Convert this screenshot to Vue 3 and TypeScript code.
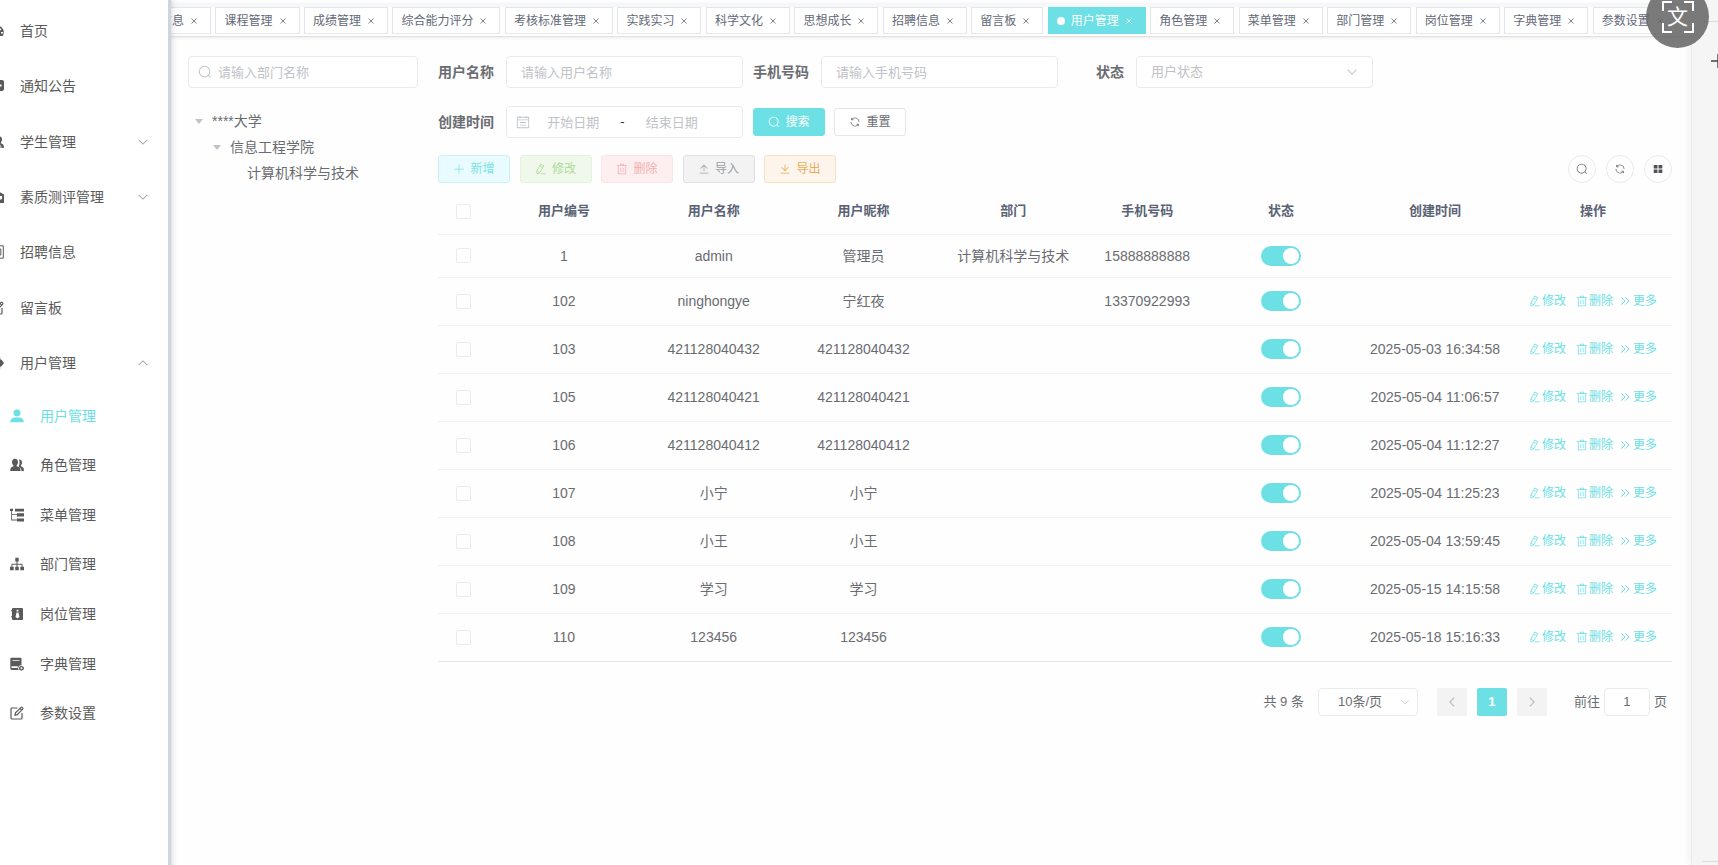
<script setup lang="ts">
import { h, ref } from 'vue'

interface IconDef {
  box: number
  d: string
  stroke?: number
}

const icons: Record<string, IconDef> = {
  search: { box: 1024, d: 'm795.904 750.72 124.992 124.928a32 32 0 0 1-45.248 45.248L750.656 795.904a416 416 0 1 1 45.248-45.248zM480 832a352 352 0 1 0 0-704 352 352 0 0 0 0 704' },
  refresh: { box: 1024, d: 'M771.776 794.88A384 384 0 0 1 128 512h64a320 320 0 0 0 555.712 216.448H654.72a32 32 0 1 1 0-64h149.056a32 32 0 0 1 32 32v148.928a32 32 0 1 1-64 0v-50.56zM276.288 295.616h92.992a32 32 0 0 1 0 64H220.16a32 32 0 0 1-32-32V178.56a32 32 0 0 1 64 0v50.56A384 384 0 0 1 896.128 512h-64a320 320 0 0 0-555.776-216.384z' },
  plus: { box: 1024, d: 'M480 480V128a32 32 0 0 1 64 0v352h352a32 32 0 1 1 0 64H544v352a32 32 0 1 1-64 0V544H128a32 32 0 0 1 0-64z' },
  edit: { box: 1024, d: 'm199.04 672.64 193.984 112 224-387.968-193.92-112-224 388.032zm-23.872 60.16 32.896 148.288 144.896-45.696zM455.04 229.248l193.92 112 56.704-98.112-193.984-112zM104.32 708.8l384-665.024 304.768 175.936L409.152 884.8h.064l-248.448 78.336zm384 254.272v-64h448v64z' },
  trash: { box: 1024, d: 'M160 256H96a32 32 0 0 1 0-64h256V95.936a32 32 0 0 1 32-32h256a32 32 0 0 1 32 32V192h256a32 32 0 1 1 0 64h-64v672a32 32 0 0 1-32 32H192a32 32 0 0 1-32-32zm448-64v-64H416v64zM224 896h576V256H224zm192-128a32 32 0 0 1-32-32V416a32 32 0 0 1 64 0v320a32 32 0 0 1-32 32m192 0a32 32 0 0 1-32-32V416a32 32 0 0 1 64 0v320a32 32 0 0 1-32 32' },
  upload: { box: 1024, d: 'M160 832h704a32 32 0 1 1 0 64H160a32 32 0 1 1 0-64m384-578.304V704h-64V247.296L237.248 490.048 192 444.8 508.8 128l316.8 316.8-45.312 45.248z' },
  download: { box: 1024, d: 'M160 832h704a32 32 0 1 1 0 64H160a32 32 0 1 1 0-64m384-253.696 236.288-236.352 45.248 45.248L508.8 704 192 387.2l45.248-45.248L480 584.704V128h64z' },
  calendar: { box: 1024, d: 'M128 384v512h768V192H768v32a32 32 0 1 1-64 0v-32H320v32a32 32 0 0 1-64 0v-32H128v128h768v64zm192-256h384V96a32 32 0 1 1 64 0v32h160a32 32 0 0 1 32 32v768a32 32 0 0 1-32 32H96a32 32 0 0 1-32-32V160a32 32 0 0 1 32-32h160V96a32 32 0 0 1 64 0zM288 512h448v64H288zm0 192h448v64H288z' },
  grid: { box: 14, d: 'M2 2.300h4.400v4.100H2zM7.600 2.300H12v4.100H7.600zM2 7.600h4.400v4.100H2zM7.600 7.600H12v4.100H7.600z' },
  down: { box: 14, d: 'M2 4.500l5 5 5-5', stroke: 1.2 },
  up: { box: 14, d: 'M2 9.500l5-5 5 5', stroke: 1.2 },
  left: { box: 14, d: 'M9.500 2l-5 5 5 5', stroke: 1.4 },
  right: { box: 14, d: 'M4.500 2l5 5-5 5', stroke: 1.4 },
  more: { box: 14, d: 'M2 2l5 5-5 5M7.500 2l5 5-5 5', stroke: 1.4 },
  close: { box: 8, d: 'M1.500 1.500l5 5M6.500 1.500l-5 5', stroke: 0.8 },
  dashboard: { box: 14, d: 'M7 1.500a6.800 6.800 0 0 1 6.800 6.800c0 1.400-.4 2.700-1.100 3.700H1.300A6.800 6.800 0 0 1 7 1.500zM6.300 3v2h1.400V3zM10.500 4.200L7.600 7.700a1.400 1.400 0 1 0 1 .8l2.800-3.500zM11 8v1.400h2V8z' },
  message: { box: 14, d: 'M2 1h10a2 2 0 0 1 2 2v7a2 2 0 0 1-2 2H6l-3 2v-2H2a2 2 0 0 1-2-2V3a2 2 0 0 1 2-2zM9.500 5.500v2h2v-2zM6 5.500v2h2v-2z' },
  people: { box: 14, d: 'M5 .8c1.900 0 3 1.300 3 3.200 0 1.500-.6 2.700-1.300 3.300v1c1.900.6 3.500 1.300 3.700 2.700l.2 2H.3l.1-2c.2-1.400 1.600-2.100 3-2.700v-1C2.600 6.700 2 5.500 2 4 2 2.100 3.100.8 5 .8zM9 1.500c1.800-.2 3 1 3 3 0 1.300-.5 2.200-1.100 2.900v.9c1.500.6 2.700 1.200 2.900 2.500l.1 2.200h-2.400c-.1-2.300-1-3.300-3-4.200C9.400 7.500 10.200 4 9 1.500z' },
  education: { box: 14, d: 'M7 .5l7 4V13H0V4.500zM9.500 6v2.800l1.300 1 1.300-1V6zM3 6v1h4V6z' },
  form: { box: 14, d: 'M1 .8h12.300v12.400H1zM3.500 4h7.300v6H3.500zM7 4v6', stroke: 1 },
  pencil: { box: 14, d: 'M7.500 2H2a1 1 0 0 0-1 1v9a1 1 0 0 0 1 1h9a1 1 0 0 0 1-1V7M5 9.200l.5-2.300L11 1.400c.8-.8 2.500.8 1.700 1.700L7.200 8.700zM10 2.400l1.700 1.700', stroke: 1.2 },
  gear: { box: 14, d: 'M3.800 1h6.400v2.200l1.300.5L14 7l-2.500 3.300-1.300.5V13H3.800v-2.200l-1.300-.5L0 7l2.500-3.300 1.300-.5zM7 5a2 2 0 1 0 0 4 2 2 0 0 0 0-4z' },
  user: { box: 14, d: 'M7 .5a3.400 3.400 0 0 1 3.500 3.500C10.500 6 9 7.500 7 7.500S3.500 6 3.500 4A3.400 3.400 0 0 1 7 .5zM.2 13.300c0-2.900 1.900-4.700 4.800-4.700h4c2.900 0 4.800 1.800 4.800 4.700z' },
  tree: { box: 14, d: 'M0 .8h3v2.200H2V6.300h5V5.300h7v3.100H7V7.100H2v4.500h5v-1.100h7v3.100H7v-1.200H1.200V3H0zM5 .8h9v2.700H5z' },
  org: { box: 14, d: 'M5.300.8h3.400v3.600H7.500v2.400h5v3H14v3.500h-3.700V9.800h1.300V7.700H7.500v2.100h1.300v3.500H5.200V9.800h1.300V7.700H2.400v2.100h1.300v3.500H0V9.800h1.500v-3h5V4.400H5.300z' },
  badge: { box: 14, d: 'M3 1h9a1 1 0 0 1 1 1v10a1 1 0 0 1-1 1H3a1 1 0 0 1-1-1V2a1 1 0 0 1 1-1zM6.600 2.800v1.800h1.800V2.800zM6.500 5.500L5.500 10l2 1.600 2-1.600-1-4.500zM1 3.300h1v1H1zM1 9.300h1v1H1z' },
  dict: { box: 14, d: 'M1.200.8h9.300a1 1 0 0 1 1 1v6.400a3 3 0 0 0-2.800 4.700H2A1.700 1.700 0 0 1 .3 11V1.800c0-.6.4-1 .9-1zM2.500 3v.8h7V3zM2 9.300c-1 0-1 1.600 0 1.600h5.800V9.300zM11.300 8.800l2.500 1.300v2.300l-2.500 1.300-2.200-1.300v-2.300zM11.400 10.300a1 1 0 1 0 .1 2 1 1 0 0 0-.1-2z' },
}

const Icon = (props: { name: string }) => {
  const def = icons[props.name]
  return h('svg', { viewBox: `0 0 ${def.box} ${def.box}`, 'aria-hidden': 'true' }, [
    h('path', {
      d: def.d,
      fill: def.stroke ? 'none' : 'currentColor',
      'fill-rule': 'evenodd',
      stroke: def.stroke ? 'currentColor' : 'none',
      'stroke-width': def.stroke ?? 0,
    }),
  ])
}

const menu = [
  { label: '首页', icon: 'dashboard' },
  { label: '通知公告', icon: 'message' },
  { label: '学生管理', icon: 'people', arrow: 'down' },
  { label: '素质测评管理', icon: 'education', arrow: 'down' },
  { label: '招聘信息', icon: 'form' },
  { label: '留言板', icon: 'pencil' },
  { label: '用户管理', icon: 'gear', arrow: 'up' },
]

const submenu = [
  { label: '用户管理', icon: 'user' },
  { label: '角色管理', icon: 'people' },
  { label: '菜单管理', icon: 'tree' },
  { label: '部门管理', icon: 'org' },
  { label: '岗位管理', icon: 'badge' },
  { label: '字典管理', icon: 'dict' },
  { label: '参数设置', icon: 'pencil' },
]
const current = ref('用户管理')

const tags = [
  '学生信息', '课程管理', '成绩管理', '综合能力评分', '考核标准管理', '实践实习', '科学文化', '思想成长', '招聘信息',
  '留言板', '用户管理', '角色管理', '菜单管理', '部门管理', '岗位管理', '字典管理', '参数设置',
]

const tools = [
  { label: '新增', icon: 'plus', kind: 'primary' },
  { label: '修改', icon: 'edit', kind: 'success' },
  { label: '删除', icon: 'trash', kind: 'danger' },
  { label: '导入', icon: 'upload', kind: 'info' },
  { label: '导出', icon: 'download', kind: 'warning' },
]

const columns = ['用户编号', '用户名称', '用户昵称', '部门', '手机号码', '状态', '创建时间', '操作']

interface User {
  id: number
  name: string
  nick: string
  dept?: string
  phone?: string
  created?: string
  on: boolean
}

const users = ref<User[]>([
  { id: 1, name: 'admin', nick: '管理员', dept: '计算机科学与技术', phone: '15888888888', on: true },
  { id: 102, name: 'ninghongye', nick: '宁红夜', phone: '13370922993', on: true },
  { id: 103, name: '421128040432', nick: '421128040432', created: '2025-05-03 16:34:58', on: true },
  { id: 105, name: '421128040421', nick: '421128040421', created: '2025-05-04 11:06:57', on: true },
  { id: 106, name: '421128040412', nick: '421128040412', created: '2025-05-04 11:12:27', on: true },
  { id: 107, name: '小宁', nick: '小宁', created: '2025-05-04 11:25:23', on: true },
  { id: 108, name: '小王', nick: '小王', created: '2025-05-04 13:59:45', on: true },
  { id: 109, name: '学习', nick: '学习', created: '2025-05-15 14:15:58', on: true },
  { id: 110, name: '123456', nick: '123456', created: '2025-05-18 15:16:33', on: true },
])
</script>

<template>
  <div class="app">
    <aside class="sidebar">
      <nav>
        <div class="menu">
          <a v-for="m in menu" :key="m.label" href="#" class="menu-item">
            <Icon :name="m.icon" class="menu-icon" />
            <span class="menu-label">{{ m.label }}</span>
            <Icon v-if="m.arrow" :name="m.arrow" class="menu-arrow" />
          </a>
        </div>
        <div class="submenu">
          <a
            v-for="m in submenu"
            :key="m.label"
            href="#"
            class="sub-item"
            :class="{ active: m.label === current }"
            @click.prevent="current = m.label"
          >
            <Icon :name="m.icon" class="menu-icon" />
            <span>{{ m.label }}</span>
          </a>
        </div>
      </nav>
    </aside>

    <main class="main">
      <div class="tags">
        <a v-for="t in tags" :key="t" href="#" class="tag" :class="{ active: t === '用户管理' }">
          <i v-if="t === '用户管理'" class="dot"></i>
          <span>{{ t }}</span>
          <Icon name="close" class="tag-close" />
        </a>
      </div>

      <div class="content">
        <section class="depts">
          <label class="field dept-search">
            <Icon name="search" class="icon14" />
            <input type="text" placeholder="请输入部门名称" aria-label="部门名称" />
          </label>
          <ul class="tree">
            <li>
              <div class="node"><i class="caret"></i>****大学</div>
              <ul>
                <li>
                  <div class="node"><i class="caret"></i>信息工程学院</div>
                  <ul>
                    <li><div class="node leaf">计算机科学与技术</div></li>
                  </ul>
                </li>
              </ul>
            </li>
          </ul>
        </section>

        <section class="users">
          <form class="filters" @submit.prevent>
            <div class="form-item">
              <label for="f-name">用户名称</label>
              <div class="field"><input id="f-name" type="text" placeholder="请输入用户名称" /></div>
            </div>
            <div class="form-item">
              <label for="f-phone">手机号码</label>
              <div class="field"><input id="f-phone" type="text" placeholder="请输入手机号码" /></div>
            </div>
            <div class="form-item">
              <label for="f-state" class="end">状态</label>
              <div class="field">
                <select id="f-state" class="empty">
                  <option>用户状态</option>
                </select>
                <Icon name="down" class="icon12" />
              </div>
            </div>
            <div class="form-item">
              <label for="f-start">创建时间</label>
              <div class="field date">
                <Icon name="calendar" class="icon14" />
                <input id="f-start" type="text" placeholder="开始日期" />
                <span class="dash">-</span>
                <input type="text" placeholder="结束日期" aria-label="结束日期" />
              </div>
            </div>
            <div class="form-actions">
              <button type="submit" class="btn solid"><Icon name="search" class="icon12" />搜索</button>
              <button type="reset" class="btn plain"><Icon name="refresh" class="icon12" />重置</button>
            </div>
          </form>

          <div class="toolbar">
            <div class="tools">
              <button v-for="t in tools" :key="t.label" type="button" class="btn" :class="t.kind">
                <Icon :name="t.icon" class="icon12" />{{ t.label }}
              </button>
            </div>
            <div class="circles">
              <button type="button" class="circle" aria-label="搜索"><Icon name="search" class="icon12" /></button>
              <button type="button" class="circle" aria-label="刷新"><Icon name="refresh" class="icon12" /></button>
              <button type="button" class="circle dark" aria-label="显隐列"><Icon name="grid" class="icon12" /></button>
            </div>
          </div>

          <table class="table">
            <colgroup>
              <col class="c-check" /><col class="c-mid" /><col class="c-mid" /><col class="c-mid" /><col class="c-mid" />
              <col class="c-phone" /><col class="c-mid" /><col class="c-wide" /><col class="c-wide" />
            </colgroup>
            <thead>
              <tr>
                <th><input type="checkbox" class="check" aria-label="全选" /></th>
                <th v-for="c in columns" :key="c">{{ c }}</th>
              </tr>
            </thead>
            <tbody>
              <tr v-for="u in users" :key="u.id">
                <td><input type="checkbox" class="check" :aria-label="'选择 ' + u.name" /></td>
                <td>{{ u.id }}</td>
                <td>{{ u.name }}</td>
                <td>{{ u.nick }}</td>
                <td>{{ u.dept }}</td>
                <td>{{ u.phone }}</td>
                <td><input v-model="u.on" type="checkbox" role="switch" class="switch" :aria-label="u.name + ' 状态'" /></td>
                <td>{{ u.created }}</td>
                <td>
                  <div v-if="u.id !== 1" class="ops">
                    <button type="button"><Icon name="edit" class="icon12" />修改</button>
                    <button type="button"><Icon name="trash" class="icon12" />删除</button>
                    <button type="button" class="more"><Icon name="more" class="icon10" />更多</button>
                  </div>
                </td>
              </tr>
            </tbody>
          </table>

          <div class="pagination">
            <span class="total">共 9 条</span>
            <div class="field size">
              <select aria-label="每页条数">
                <option>10条/页</option>
              </select>
              <Icon name="down" class="icon10" />
            </div>
            <div class="pager">
              <button type="button" disabled aria-label="上一页"><Icon name="left" class="icon12" /></button>
              <button type="button" class="active">1</button>
              <button type="button" disabled aria-label="下一页"><Icon name="right" class="icon12" /></button>
            </div>
            <label class="jump">
              前往
              <span class="field"><input type="text" value="1" /></span>
              页
            </label>
          </div>
        </section>
      </div>
    </main>

    <div class="rail">
      <i class="rail-line"></i>
      <svg class="rail-plus" viewBox="0 0 14 14" aria-hidden="true"><path d="M0 7h14M7 0v14" fill="none" stroke="#444" stroke-width="1.400" /></svg>
      <i class="rail-line bottom"></i>
    </div>

    <button type="button" class="translate" aria-label="翻译">
      <svg viewBox="0 0 32 32" aria-hidden="true">
        <path d="M1 10V1h9M22 1h9v9M31 22v9h-9M10 31H1v-9" fill="none" stroke="#fff" stroke-width="2" />
      </svg>
      <span>文</span>
    </button>
  </div>
</template>

<style>
body {
  margin: 0;
  background: #fefefe;
}
</style>

<style scoped>
* {
  box-sizing: border-box;
}
.app {
  position: relative;
  display: flex;
  min-height: 100vh;
  overflow: hidden;
  background: #fefefe;
  color: #6a6c71;
  font: 14px/20px 'Liberation Sans', 'Noto Sans CJK SC', sans-serif;
}
a {
  color: inherit;
  text-decoration: none;
}
button,
input,
select {
  margin: 0;
  padding: 0;
  border: 0;
  background: none;
  color: inherit;
  font: inherit;
}
svg {
  display: block;
  flex: none;
}
.icon14 {
  width: 14px;
  height: 14px;
}
.icon12 {
  width: 12px;
  height: 12px;
}
.icon10 {
  width: 10px;
  height: 10px;
}

/* sidebar */
.sidebar {
  z-index: 2;
  flex: none;
  width: 168px;
  padding-top: 3px;
  background: #fff;
  box-shadow: 2px 0 1px 1px #d0d5db, 3px 0 5px 2px rgba(100, 115, 135, 0.2);
  color: #5a5a5a;
}
.menu,
.submenu {
  display: grid;
  grid-auto-rows: 1fr;
}
.menu {
  height: 388px;
}
.submenu {
  height: 347px;
}
.menu-item,
.sub-item {
  display: flex;
  align-items: center;
}
.menu-item {
  gap: 16px;
  margin-left: -10px;
  padding-right: 19px;
}
.menu-label {
  flex: 1;
}
.sub-item {
  gap: 16px;
  padding-left: 10px;
}
.sub-item.active {
  color: #6ce0e5;
}
.menu-icon {
  width: 14px;
  height: 14px;
}
.menu-arrow {
  width: 12px;
  height: 12px;
  color: #a8a8a8;
}

/* tags */
.main {
  flex: 1;
  min-width: 0;
}
.tags {
  display: flex;
  justify-content: space-between;
  height: 34px;
  margin-top: 3px;
  margin-left: -41px;
  padding: 3px 14px 0 0;
  border-top: 1px solid #f5f6f8;
  border-bottom: 1px solid #dfe1e4;
  box-shadow: 0 1px 3px rgba(0, 0, 0, 0.08), inset 0 3px 0 #f6f7f9;
}
.tag {
  display: flex;
  align-items: center;
  justify-content: space-between;
  height: 27px;
  padding: 0 12px 0 8px;
  gap: 6px;
  border: 1px solid #e4e6ec;
  background: #fff;
  color: #636978;
  font-size: 12px;
  white-space: nowrap;
}
.tag-close {
  width: 8px;
  height: 8px;
}
.tag.active {
  border-color: #6ce0e5;
  background: #6ce0e5;
  color: #fff;
}
.dot {
  width: 8px;
  height: 8px;
  border-radius: 50%;
  background: #fff;
}

/* content */
.content {
  display: flex;
  gap: 20px;
  padding: 19px 19px 20px 20px;
}
.depts {
  flex: none;
  width: 230px;
}
.field {
  display: flex;
  align-items: center;
  height: 32px;
  padding: 0 14px;
  border: 1px solid #e8eaef;
  border-radius: 4px;
  background: #fff;
  color: #bfc2c9;
  font-size: 13px;
}
.field input,
.field select {
  flex: 1;
  width: 0;
  min-width: 0;
  height: 100%;
  outline: 0;
  appearance: none;
  color: #6a6c71;
}
.field select.empty,
.field input::placeholder {
  color: #bfc2c9;
  opacity: 1;
}
.dept-search {
  gap: 6px;
  padding: 0 9px;
}
.tree {
  margin-top: 20px;
  margin-bottom: 0;
}
.tree,
.tree ul {
  padding: 0;
  list-style: none;
}
.tree ul {
  padding-left: 18px;
}
.node {
  display: flex;
  align-items: center;
  gap: 9px;
  height: 26px;
  padding-left: 7px;
}
.leaf {
  padding-left: 23px;
}
.caret {
  border: 4px solid transparent;
  border-top: 5px solid #bfc2c9;
  border-bottom: 0;
}

.users {
  flex: 1;
  min-width: 0;
}
.filters {
  display: flex;
  flex-wrap: wrap;
  gap: 18px 10px;
  padding-right: 250px;
}
.form-item {
  display: flex;
  align-items: center;
}
.form-item label {
  width: 68px;
  padding-right: 12px;
  font-weight: bold;
}
.form-item label.end {
  text-align: right;
}
.form-item .field {
  width: 237px;
}
.field.date {
  padding: 0 27px 0 9px;
}
.date input {
  text-align: center;
}
.date .dash {
  padding: 0 4px;
  color: #303133;
}
.form-actions {
  display: flex;
  align-items: center;
  gap: 9px;
}
.btn {
  display: flex;
  align-items: center;
  justify-content: center;
  gap: 5px;
  width: 72px;
  height: 28px;
  border: 1px solid;
  border-radius: 3px;
  font-size: 12px;
}
.solid {
  border-color: #6ce0e5;
  background: #6ce0e5;
  color: #fff;
}
.plain {
  border-color: #e4e6eb;
  background: #fff;
  color: #6a6c71;
}
.primary {
  border-color: #c9f4f6;
  background: #e9fbfe;
  color: #7be3e7;
}
.success {
  border-color: #e4f3dc;
  background: #f0f8eb;
  color: #aedc97;
}
.danger {
  border-color: #fce4e4;
  background: #fdefef;
  color: #f3afaf;
}
.info {
  border-color: #dfe0e2;
  background: #f3f3f4;
  color: #9c9fa5;
}
.warning {
  border-color: #f6e2c2;
  background: #fdf5ec;
  color: #e3ae57;
}
.toolbar {
  display: flex;
  justify-content: space-between;
  margin: 17px 0 6px;
}
.tools {
  display: flex;
  justify-content: space-between;
  width: 398px;
}
.circles {
  display: flex;
  gap: 10px;
}
.circle {
  display: flex;
  align-items: center;
  justify-content: center;
  width: 28px;
  height: 28px;
  border: 1px solid #e8eaed;
  border-radius: 50%;
}
.circle.dark {
  color: #505256;
}

/* table */
.table {
  width: 100%;
  table-layout: fixed;
  border-collapse: collapse;
}
.c-check {
  width: 51px;
}
.c-phone {
  width: 118px;
}
.c-wide {
  width: 158px;
}
th,
td {
  height: 48px;
  padding: 0;
  border-bottom: 1px solid #f2f3f7;
  text-align: center;
  vertical-align: middle;
  white-space: nowrap;
}
th {
  height: 45px;
  color: #5a6275;
  font-size: 13px;
}
tbody tr:first-child td {
  height: 43px;
}
tbody tr:last-child td {
  border-bottom-color: #e4e6ed;
}
.check {
  display: block;
  width: 15px;
  height: 15px;
  margin: 0 auto;
  appearance: none;
  border: 1px solid #e9ebf0;
  border-radius: 2px;
  background: #fff;
}
.check:checked {
  border-color: #6ce0e5;
  background: #6ce0e5;
}
.switch {
  display: flex;
  align-items: center;
  width: 40px;
  height: 20px;
  margin: 0 auto;
  padding: 0 2px;
  appearance: none;
  border-radius: 10px;
  background: #dcdfe6;
}
.switch::before {
  width: 16px;
  height: 16px;
  border-radius: 50%;
  background: #fff;
  content: '';
}
.switch:checked {
  justify-content: flex-end;
  background: #6ce0e5;
}
.ops {
  display: flex;
  justify-content: center;
  gap: 10px;
  color: #6ce0e5;
  font-size: 12px;
}
.ops button {
  display: flex;
  align-items: center;
  gap: 1px;
}
.ops .more {
  gap: 3px;
  margin-left: -3px;
}

/* pagination */
.pagination {
  display: flex;
  align-items: center;
  justify-content: flex-end;
  margin-top: 26px;
  padding-right: 5px;
  font-size: 13px;
}
.pagination .field {
  height: 28px;
}
.size {
  width: 100px;
  margin: 0 19px 0 14px;
  padding: 0 7px 0 19px;
}
.pager {
  display: flex;
  gap: 10px;
}
.pager button {
  display: flex;
  align-items: center;
  justify-content: center;
  width: 30px;
  height: 28px;
  border-radius: 2px;
  background: #f3f3f4;
  color: #bcbfc5;
}
.pager .active {
  background: #6ce0e5;
  color: #fff;
  font-weight: bold;
}
.jump {
  display: flex;
  align-items: center;
  gap: 4px;
  margin-left: 27px;
}
.jump .field {
  width: 46px;
  padding: 0;
}
.jump input {
  text-align: center;
}

/* right rail and floating translate button */
.rail {
  position: relative;
  flex: none;
  width: 27px;
  border-left: 1px solid #ececec;
  background: #f5f5f5;
  box-shadow: -2px 0 7px rgba(0, 0, 0, 0.06);
}
.rail-line {
  position: absolute;
  top: 21px;
  right: 0;
  width: 16px;
  height: 1px;
  background: #dcdcdc;
}
.rail-line.bottom {
  top: auto;
  bottom: 3px;
}
.rail-plus {
  position: absolute;
  top: 54px;
  right: -7px;
  width: 14px;
  height: 14px;
}
.translate {
  position: absolute;
  z-index: 3;
  top: -15px;
  right: 9px;
  display: grid;
  place-items: center;
  width: 63px;
  height: 63px;
  border-radius: 50%;
  background: rgba(100, 100, 100, 0.86);
  color: #fff;
  font-size: 21px;
  line-height: 24px;
}
.translate svg,
.translate span {
  grid-area: 1 / 1;
}
.translate svg {
  width: 32px;
  height: 32px;
}
</style>
